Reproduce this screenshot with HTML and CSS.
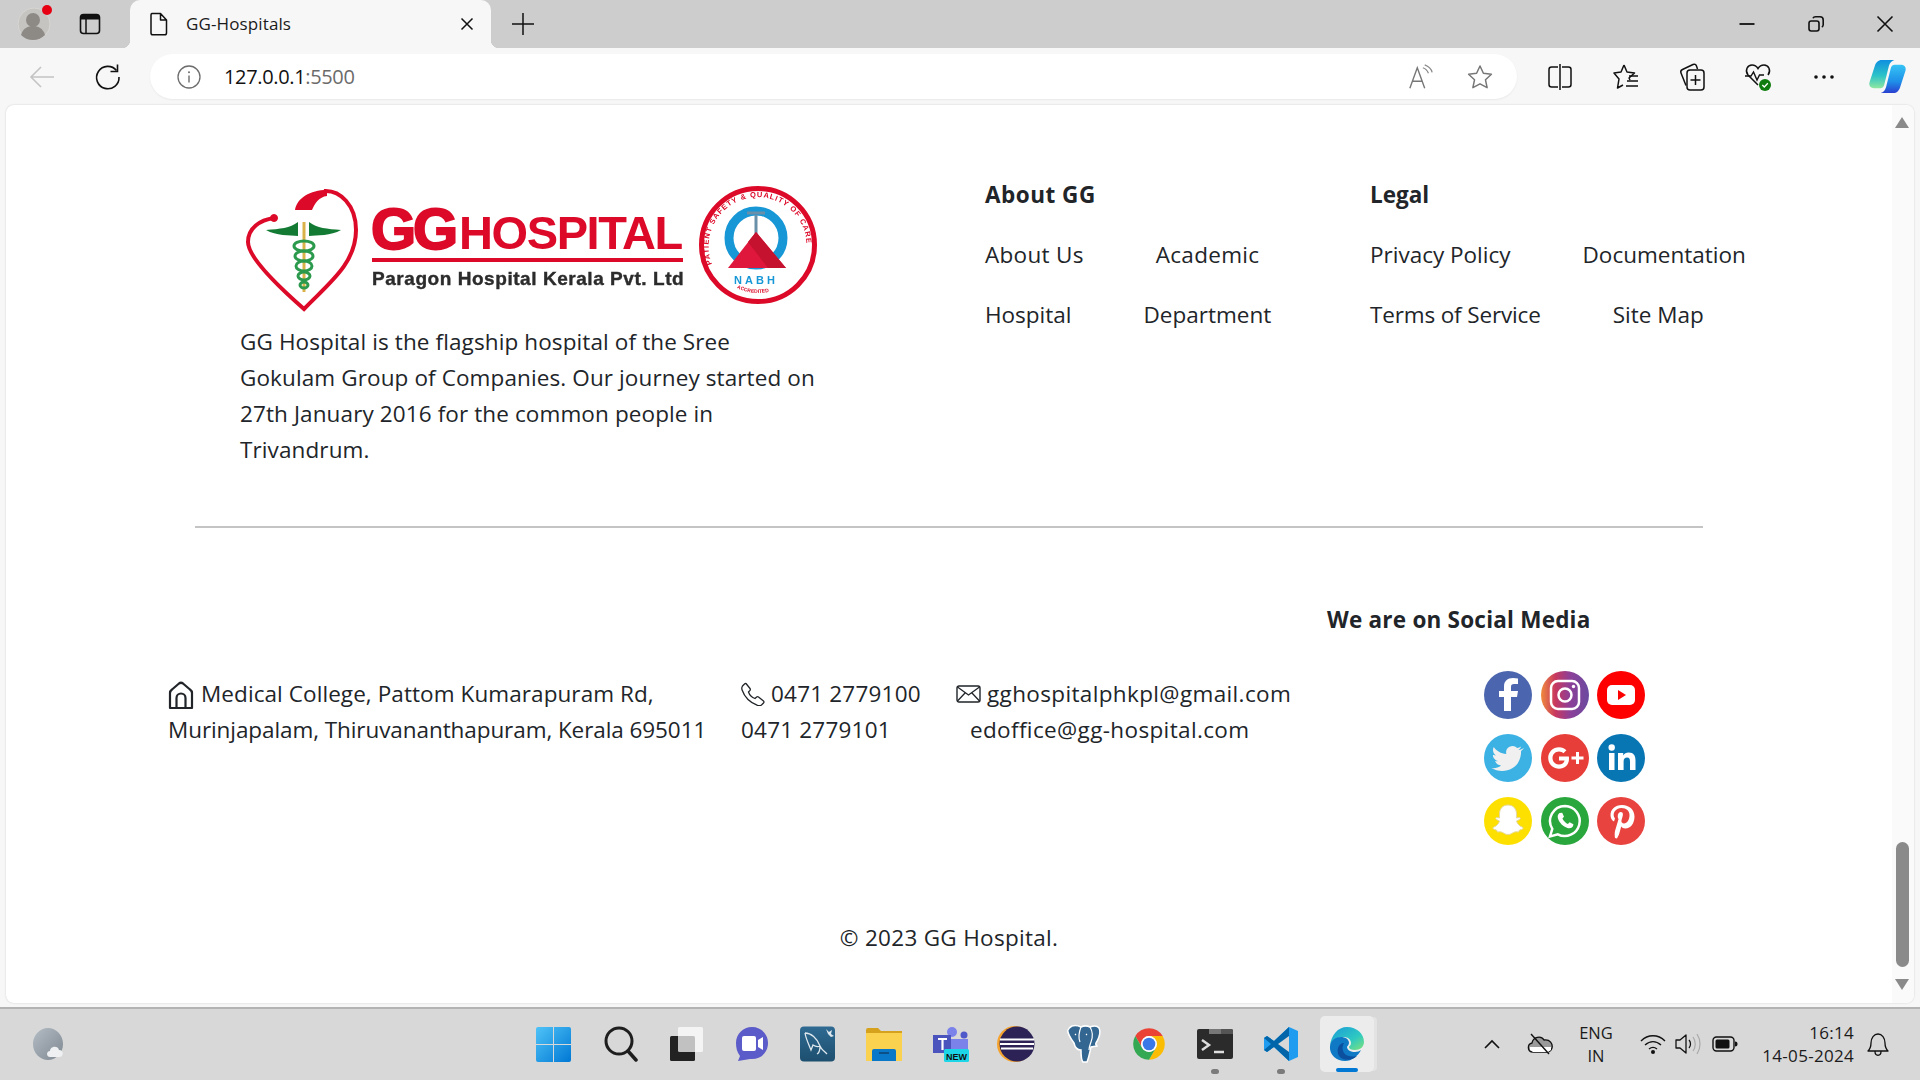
FILE: index.html
```html
<!DOCTYPE html>
<html lang="en">
<head>
<meta charset="utf-8">
<title>GG-Hospitals</title>
<link rel="stylesheet" href="styles.css">
</head>
<body>
<header class="tabstrip">
  <div class="slot profile">
    <svg width="40" height="40" viewBox="0 0 40 40"><circle cx="20" cy="20" r="16" fill="#c6c4c1" stroke="#d8d6d3"/><circle cx="19" cy="16" r="7" fill="#8d8a86"/><path d="M7 31c2-7 7-9 12-9s10 2 12 9c-3 3-7 5-12 5s-9-2-12-5z" fill="#8d8a86"/><circle cx="33" cy="6" r="5" fill="#e60012"/></svg>
  </div>
  <div class="slot tabs-btn">
    <svg width="24" height="24" viewBox="0 0 24 24"><rect x="2.500" y="2.500" width="19" height="19" rx="3" fill="none" stroke="#111" stroke-width="1.600"/><path d="M2.500 5.500a3 3 0 0 1 3-3h13a3 3 0 0 1 3 3v2h-19z" fill="#111"/><path d="M8 7v14" stroke="#111" stroke-width="1.500"/></svg>
  </div>
  <div class="tab">
    <svg class="doc" width="20" height="24" viewBox="0 0 20 24"><path d="M3 1.500h8.500l6 6.500v13a1.800 1.800 0 0 1-1.800 1.800H3.800A1.800 1.800 0 0 1 2 21V3a1.500 1.500 0 0 1 1-1.500zM11.500 1.500V8h6" fill="none" stroke="#111" stroke-width="1.500" stroke-linejoin="round"/></svg>
    <span class="tab-title">GG-Hospitals</span>
    <svg class="tab-close" width="24" height="24" viewBox="0 0 24 24"><path d="M6.500 6.500l11 11M17.500 6.500l-11 11" stroke="#111" stroke-width="1.500"/></svg>
  </div>
  <div class="slot plus">
    <svg width="24" height="24" viewBox="0 0 24 24"><path d="M12 1v22M1 12h22" stroke="#111" stroke-width="1.500"/></svg>
  </div>
  <div class="win-controls">
    <div class="win-btn"><svg width="18" height="18" viewBox="0 0 18 18"><path d="M1.500 9h15" stroke="#111" stroke-width="1.800"/></svg></div>
    <div class="win-btn"><svg width="18" height="18" viewBox="0 0 18 18"><rect x="2" y="6" width="10" height="10" rx="2.200" fill="none" stroke="#111" stroke-width="1.600"/><path d="M6 3.200C6.500 2 7.500 1.800 8.500 1.800h4.500c2 0 3.200 1.200 3.200 3.200v4.800c0 1-.4 1.800-1.400 2.200" fill="none" stroke="#111" stroke-width="1.600"/></svg></div>
    <div class="win-btn"><svg width="18" height="18" viewBox="0 0 18 18"><path d="M1.500 1.500l15 15M16.500 1.500l-15 15" stroke="#111" stroke-width="1.600"/></svg></div>
  </div>
</header>

<nav class="toolbar">
  <div class="tool"><svg width="28" height="28" viewBox="0 0 28 28"><path d="M26 14H3M13 4L3 14l10 10" fill="none" stroke="#c4c4c4" stroke-width="1.600"/></svg></div>
  <div class="tool"><svg width="28" height="28" viewBox="0 0 28 28"><path d="M22.500 7.500A11.200 11.200 0 1 0 25 14" fill="none" stroke="#111" stroke-width="1.600"/><path d="M23.500 1.500v7h-7" fill="none" stroke="#111" stroke-width="1.600"/></svg></div>
  <div class="pill">
    <svg class="info" width="24" height="24" viewBox="0 0 24 24"><circle cx="12" cy="12" r="11" fill="none" stroke="#6d6d6d" stroke-width="1.300"/><path d="M12 10.500v7" stroke="#6d6d6d" stroke-width="1.400"/><circle cx="12" cy="7.300" r="1" fill="#6d6d6d"/></svg>
    <span class="url">127.0.0.1<span class="port">:5500</span></span>
    <div class="pill-actions">
      <div class="pill-action"><svg width="26" height="26" viewBox="0 0 28 28"><path d="M2 26L10 4l8 22M4.800 18.500h10.500" fill="none" stroke="#777" stroke-width="1.500"/><path d="M16 4c3 1 5 3 6 6M18 1c4 1.500 7 4 8 8" fill="none" stroke="#888" stroke-width="1.300"/></svg></div>
      <div class="pill-action"><svg width="28" height="28" viewBox="0 0 28 28"><path d="M14 3l3.400 7.300 8 1-5.900 5.500 1.600 7.900L14 20.800l-7.100 3.900 1.600-7.900-5.900-5.500 8-1z" fill="none" stroke="#777" stroke-width="1.500" stroke-linejoin="round"/></svg></div>
    </div>
  </div>
  <div class="tools-right">
    <div class="tool"><svg width="26" height="28" viewBox="0 0 26 28"><path d="M11 4H4.500A2.500 2.500 0 0 0 2 6.500v15A2.500 2.500 0 0 0 4.500 24H11M15 4h6.500A2.500 2.500 0 0 1 24 6.500v15a2.500 2.500 0 0 1-2.500 2.500H15" fill="none" stroke="#111" stroke-width="1.500"/><path d="M13 1v26" stroke="#111" stroke-width="1.500"/></svg></div>
    <div class="tool"><svg width="28" height="28" viewBox="0 0 28 28"><path d="M12 2l3 7 7.500 1-5.500 5 1 2M12 2L9 9l-7 1 5 6-1.500 9L11 22" fill="none" stroke="#111" stroke-width="1.500" stroke-linejoin="round"/><path d="M17 13h9M15 18h11M14 23h12" stroke="#111" stroke-width="1.500"/></svg></div>
    <div class="tool"><svg width="28" height="30" viewBox="0 0 28 30"><path d="M8 23.500L3 11c-.6-1.600 0-2.800 1.500-3.500L15 2.500c1.600-.7 3 0 3.500 1.500l1 3" fill="none" stroke="#111" stroke-width="1.500"/><rect x="9" y="8" width="17" height="20" rx="3" fill="#f7f7f7" stroke="#111" stroke-width="1.500"/><path d="M17.500 13v10M12.500 18h10" stroke="#111" stroke-width="1.500"/></svg></div>
    <div class="tool"><svg width="28" height="30" viewBox="0 0 28 30"><path d="M14 23L4 13C.5 8.500 3.500 3 8 3c2.800 0 4.800 1.500 6 3.500C15.200 4.500 17.200 3 20 3c4.500 0 7.500 5.500 4 10" fill="none" stroke="#111" stroke-width="1.500"/><path d="M1 14h6l2.500-4 3.500 8 2.500-5H20" fill="none" stroke="#111" stroke-width="1.400"/><circle cx="21" cy="23" r="6" fill="#107c10"/><path d="M18.300 23l2 2 3.500-3.800" fill="none" stroke="#fff" stroke-width="1.300"/></svg></div>
    <div class="tool"><svg width="22" height="6" viewBox="0 0 22 6"><circle cx="3" cy="3" r="1.800" fill="#111"/><circle cx="11" cy="3" r="1.800" fill="#111"/><circle cx="19" cy="3" r="1.800" fill="#111"/></svg></div>
    <div class="tool tool-last"><svg width="37" height="33" viewBox="0 0 38 34"><defs><linearGradient id="cp1" x1="0" y1="0" x2="0" y2="1"><stop offset="0" stop-color="#0f8fe0"/><stop offset=".55" stop-color="#2cc3c8"/><stop offset="1" stop-color="#8fe6a0"/></linearGradient><linearGradient id="cp2" x1="0" y1="0" x2="0" y2="1"><stop offset="0" stop-color="#35c3f5"/><stop offset=".6" stop-color="#1e8fe8"/><stop offset="1" stop-color="#2a3fd0"/></linearGradient></defs><path d="M13 0h13c-3 1-4.500 3-5.500 6l-5 20c-.7 2-2 3-4 3H5c-3.500 0-5.500-2.500-4.500-6L6 6c1-3.500 3.500-6 7-6z" fill="url(#cp1)"/><path d="M25 34H12c3-1 4.500-3 5.500-6l5-20c.7-2 2-3 4-3H33c3.500 0 5.500 2.500 4.500 6L32 28c-1 3.500-3.500 6-7 6z" fill="url(#cp2)"/></svg></div>
  </div>
</nav>

<main class="page">
  <div class="content">
    <section class="top-row">
      <div class="about">
        <svg class="logo" width="585" height="135" viewBox="0 0 585 135">
          <g fill="none" stroke="#dc0a28">
            <path d="M34 38C20 40 8 48 8 62c0 16 32 46 56 67 24-25 52-45 52-79 0-25-16-40-32-39" stroke-width="4"/>
            <circle cx="34" cy="38" r="3.500" fill="#dc0a28"/>
          </g>
          <path d="M55 30c2-12 15-20 32-20l0 6c-8 1-12 7-15 14z" fill="#dc0a28"/>
          <path d="M26 50c14-1 24-2 32-8v14c-8-1-22 0-32-6zM101 50c-14-1-24-2-32-8v14c8-1 22 0 32-6z" fill="#137a34"/>
          <path d="M64 42v70" stroke="#d9b24a" stroke-width="3"/>
          <g fill="none" stroke="#2c9a4c" stroke-width="3"><ellipse cx="64" cy="66" rx="10" ry="5"/><ellipse cx="64" cy="76" rx="9" ry="5"/><ellipse cx="64" cy="86" rx="8" ry="5"/><ellipse cx="64" cy="96" rx="6" ry="4"/><ellipse cx="64" cy="105" rx="4" ry="3"/></g>
          <text class="logo-gg" x="131" y="69">GG</text>
          <text class="logo-hospital" x="219" y="69">HOSPITAL</text>
          <rect x="132" y="78" width="311" height="4" fill="#dc0a28"/>
          <text class="logo-sub" x="132" y="105">Paragon Hospital Kerala Pvt. Ltd</text>
          <circle cx="518" cy="65" r="56.500" fill="#fff" stroke="#dc0a28" stroke-width="5"/>
          <defs><path id="arc-top" d="M472 84a49 49 0 1 1 92-2"/><path id="arc-bottom" d="M490 104a48 48 0 0 0 56 0"/></defs>
          <text class="logo-ring"><textPath href="#arc-top">PATIENT SAFETY &amp; QUALITY OF CARE</textPath></text>
          <text class="logo-ring-small"><textPath href="#arc-bottom" startOffset="8">ACCREDITED</textPath></text>
          <circle cx="516" cy="58" r="27" fill="#fff" stroke="#1797d6" stroke-width="9"/>
          <path d="M507 33h18M516 35v22" stroke="#6a8fa8" stroke-width="3"/>
          <path d="M516 52l30 36h-58z" fill="#e0173c"/>
          <path d="M516 52l-8 10 20 26h18z" fill="#c4122f"/>
          <text class="logo-nabh" x="516" y="104">NABH</text>
        </svg>
        <p class="intro">GG Hospital is the flagship hospital of the Sree Gokulam Group of Companies. Our journey started on 27th January 2016 for the common people in Trivandrum.</p>
      </div>
      <div class="link-col">
        <h4 class="col-title about-title">About GG</h4>
        <div class="link-row wide"><span>About Us</span><span>Academic</span></div>
        <div class="link-row"><span>Hospital</span><span>Department</span></div>
      </div>
      <div class="link-col">
        <h4 class="col-title">Legal</h4>
        <div class="link-row"><span>Privacy Policy</span><span>Documentation</span></div>
        <div class="link-row"><span class="narrow">Terms of Service</span><span>Site Map</span></div>
      </div>
    </section>

    <hr class="rule">

    <section class="contact-row">
      <div class="contact address">
        <svg class="ic-home" width="26" height="29" viewBox="0 0 26 29"><path d="M2 27V12q0-2 2-3.500l7-6q2-1.500 4 0l7 6q2 1.500 2 3.500v15zM8.500 27V17a4.500 4.500 0 0 1 9 0v10" fill="none" stroke="#212529" stroke-width="2.200" stroke-linejoin="round"/></svg><span class="addr-1">Medical College, Pattom Kumarapuram Rd,</span><br><span class="addr-2">Murinjapalam, Thiruvananthapuram, Kerala 695011</span>
      </div>
      <div class="contact phone">
        <svg class="ic-phone" width="24" height="24" viewBox="0 0 24 24"><path d="M5 1.500l4 5c.5.700.4 1.300 0 1.900L7.500 10c1 3 3.500 5.500 6.500 6.500l1.600-1.500c.6-.4 1.200-.5 1.900 0l5 4c.7.600.6 1.400 0 2l-2 2c-1 .7-2.500.9-4 .4C9 20.500 3.500 15 1.100 8c-.5-1.500-.3-3 .4-4l2-2c.5-.6 1-.9 1.500-.5z" fill="none" stroke="#212529" stroke-width="1.300"/></svg>0471 2779100<br>0471 2779101
      </div>
      <div class="contact email">
        <svg class="ic-mail" width="25" height="18" viewBox="0 0 25 18"><rect x="1" y="1" width="23" height="16" rx="2" fill="none" stroke="#212529" stroke-width="1.400"/><path d="M1.500 2l11 8 11-8M1.500 16l8-8.500M23.500 16l-8-8.500" fill="none" stroke="#212529" stroke-width="1.300"/></svg>gghospitalphkpl@gmail.com<br><span class="email-2">edoffice@gg-hospital.com</span>
      </div>
      <div class="social">
        <h4 class="col-title social-title">We are on Social Media</h4>
        <div class="social-grid">
          <svg viewBox="0 0 48 48"><circle cx="24" cy="24" r="24" fill="#4b66ae"/><path d="M27 40V26h6l1-6h-7v-4c0-2 .7-3 3-3h4V7.500c-1.500-.3-3.500-.5-5-.5-5.500 0-9 3-9 8.500V20h-5v6h5v14z" fill="#fff"/></svg>
          <svg viewBox="0 0 48 48"><defs><linearGradient id="ig" x1="0" y1="0" x2="1" y2="0"><stop offset="0" stop-color="#f08a3c"/><stop offset=".3" stop-color="#c8385f"/><stop offset=".6" stop-color="#8d3f97"/><stop offset="1" stop-color="#6a4ba0"/></linearGradient></defs><circle cx="24" cy="24" r="24" fill="url(#ig)"/><rect x="10" y="10" width="28" height="28" rx="7" fill="none" stroke="#fff" stroke-width="2.500"/><circle cx="24" cy="24" r="6.500" fill="none" stroke="#fff" stroke-width="2.500"/><circle cx="32.500" cy="15.500" r="1.700" fill="#fff"/></svg>
          <svg viewBox="0 0 48 48"><circle cx="24" cy="24" r="24" fill="#fe0000"/><rect x="10" y="14" width="28" height="20" rx="5" fill="#fff"/><path d="M21 19v10l8-5z" fill="#fe0000"/></svg>
          <svg viewBox="0 0 48 48"><circle cx="24" cy="24" r="24" fill="#3cb1e3"/><path d="M38 15c-1.200.6-2.400.9-3.600 1 1.300-.8 2.200-2 2.700-3.400-1.200.7-2.500 1.200-3.900 1.500a6.400 6.400 0 0 0-10.900 5.800C17 19.600 12.300 17 9.800 13c-1.600 3-.7 6.300 2 8.500-1 0-2-.3-2.900-.8 0 3.100 2.200 5.700 5.100 6.300-.9.300-1.900.3-2.900.1.800 2.500 3.200 4.400 6 4.400-2.800 2.200-6 3-9.500 2.600 10.500 6.500 29.500 2.500 29.500-17 1.200-.9 2.200-1.900 3-3z" fill="#f0f0f0"/></svg>
          <svg viewBox="0 0 48 48"><circle cx="24" cy="24" r="24" fill="#e73e39"/><path d="M18 17.500c2 0 3.400.8 4.400 1.800l3-3C23.400 14.400 21 13.300 18 13.300c-6 0-10.800 4.700-10.800 10.700S12 34.700 18 34.700c6.300 0 10-4.300 10-10 0-.8 0-1.500-.200-2.200H18v4h5.600c-.6 2.600-2.700 4-5.600 4-3.700 0-6.500-2.900-6.500-6.500s2.800-6.500 6.500-6.500z" fill="#fff"/><path d="M35 18v4.500h-4.500v3H35V30h3v-4.500h4.500v-3H38V18z" fill="#fff"/></svg>
          <svg viewBox="0 0 48 48"><circle cx="24" cy="24" r="24" fill="#0976b4"/><rect x="12" y="19" width="5.500" height="17" fill="#fff"/><circle cx="14.700" cy="13.500" r="3.200" fill="#fff"/><path d="M21 19h5.200v2.500c1-1.700 3-3 5.500-3 5 0 6.800 3 6.800 8V36H33v-8.500c0-2.500-.7-4-2.800-4-2.300 0-3.600 1.600-3.600 4V36H21z" fill="#fff"/></svg>
          <svg viewBox="0 0 48 48"><circle cx="24" cy="24" r="24" fill="#fde000"/><path d="M24 8c5.500 0 8.500 4 8.500 9v4l3-.5c1 .5 1 1.500 0 2l-3 1.500c.7 3 3.500 5.500 6.500 6.500.5 1-.5 2-3.500 2.500l-1 2c-2.500-.5-4.500 0-6 1-1.500 1-3 1.500-4.500 1.500s-3-.5-4.500-1.500c-1.500-1-3.500-1.500-6-1l-1-2c-3-.5-4-1.500-3.500-2.500 3-1 5.800-3.500 6.500-6.500l-3-1.500c-1-.5-1-1.500 0-2l3 .5v-4c0-5 3-9 8.500-9z" fill="#fff" stroke="#e6d9a0"/></svg>
          <svg viewBox="0 0 48 48"><circle cx="24" cy="24" r="24" fill="#29a63c"/><path d="M24 9a15 15 0 0 0-12.700 22.900L9 39.500l7.800-2.200A15 15 0 1 0 24 9z" fill="none" stroke="#fff" stroke-width="2.500"/><path d="M18.500 16c-1.500 1.200-2.300 3-1.500 5.500 1.500 4.500 5 8 9.500 9.500 2.500.7 4.500 0 5.500-1.700l.4-2-3.800-2-1.700 1.700c-2-.8-4.500-3.200-5.500-5.500l1.600-1.700-1.800-4z" fill="#fff"/></svg>
          <svg viewBox="0 0 48 48"><circle cx="24" cy="24" r="24" fill="#e8433e"/><path d="M25 8c-7 0-11.500 4.500-11.500 10 0 3 1.300 5.500 3.500 6.500l1-3c-3.500-4.500.3-10.500 6.500-10.500 5 0 8 3 8 7 0 4.500-2.300 8.500-5.500 8.500-1.800 0-3-1.400-2.500-3.200.5-2 1.400-4.300 1.400-5.800 0-3.800-5.200-3-5.200 1.800 0 1 .3 2.200.8 3L18 34c-.5 2.500-.3 5 0 7l2 .5c1.500-2.500 2.500-5 3-7.500l1.200-4.500c.8 1.200 2.300 2 4 2 5.800 0 9.300-5.500 9.300-12C37.500 13 32.500 8 25 8z" fill="#fff"/></svg>
        </div>
      </div>
    </section>

    <p class="copyright">© 2023 GG Hospital.</p>
  </div>
  <aside class="scrollbar">
    <span class="arrow-up"></span>
    <span class="thumb"></span>
    <span class="arrow-down"></span>
  </aside>
</main>

<footer class="taskbar">
  <div class="weather"><svg width="36" height="36" viewBox="0 0 36 36"><defs><linearGradient id="wx" x1="0" y1="0" x2="1" y2="1"><stop offset="0" stop-color="#b4bcc4"/><stop offset="1" stop-color="#7f8992"/></linearGradient></defs><ellipse cx="18" cy="18" rx="15" ry="16" fill="url(#wx)"/><path d="M20 31c-4 0-4-6 0-6 0-5 8-6 9-1 5 0 5 7 0 7z" fill="#eef0f2"/></svg></div>
  <div class="apps">
    <div class="app"><svg width="35" height="35" viewBox="0 0 35 35"><defs><linearGradient id="win" x1="0" y1="0" x2="1" y2="1"><stop offset="0" stop-color="#4fc3f7"/><stop offset="1" stop-color="#0078d4"/></linearGradient></defs><path d="M0 2a2 2 0 0 1 2-2h15v17H0zM18 0h15a2 2 0 0 1 2 2v15H18zM0 18h17v17H2a2 2 0 0 1-2-2zM18 18h17v15a2 2 0 0 1-2 2H18z" fill="url(#win)"/></svg></div>
    <div class="app search-app"><svg width="34" height="36" viewBox="0 0 34 36"><ellipse cx="15" cy="15" rx="13" ry="13" fill="none" stroke="#1e1e1e" stroke-width="3"/><path d="M24 25l8 9" stroke="#1e1e1e" stroke-width="3.500" stroke-linecap="round"/></svg></div>
    <div class="app"><svg width="36" height="36" viewBox="0 0 36 36"><rect x="3" y="10" width="25" height="25" rx="1.500" fill="#222"/><rect x="11" y="1" width="25" height="25" rx="1.500" fill="#fff" opacity=".72"/></svg></div>
    <div class="app"><svg width="36" height="36" viewBox="0 0 36 36"><path d="M18 1c9 0 16 7 16 16 0 10-8 17-18 16l-12 2 2-5C3 26 2 22 2 17 2 8 9 1 18 1z" fill="#5b5bc9"/><rect x="8" y="10" width="14" height="15" rx="2" fill="#fff"/><path d="M24 14l5-3v13l-5-3z" fill="#fff"/></svg></div>
    <div class="app"><svg width="36" height="36" viewBox="0 0 36 36"><defs><linearGradient id="my" x1="0" y1="0" x2="0" y2="1"><stop offset="0" stop-color="#2f6a92"/><stop offset="1" stop-color="#1d4f6f"/></linearGradient></defs><rect width="35" height="35" y=".5" rx="4" fill="url(#my)"/><path d="M5 7c6 0 12 5 15 13 1 3 4 5 7 8M5 7c1 6 4 12 6 17l2-5c3 2 5 2 7 1M17 28c2-1 3-3 3-8" fill="none" stroke="#dfe8ee" stroke-width="1.300"/><path d="M26 3l3 3 3-2-1 4 3 2-3 1-3-3z" fill="#dfe8ee"/></svg></div>
    <div class="app"><svg width="36" height="36" viewBox="0 0 36 36"><path d="M0 4a2 2 0 0 1 2-2h10l3 3h21v4H0z" fill="#d6a21e"/><path d="M0 7h36v28H0z" fill="#fbd24f"/><path d="M6 35V25a2 2 0 0 1 2-2h20a2 2 0 0 1 2 2v10z" fill="#0a78c9"/><path d="M13 27h10" stroke="#0b4f86" stroke-width="2"/></svg></div>
    <div class="app"><svg width="38" height="38" viewBox="0 0 38 38"><circle cx="21" cy="7" r="5" fill="#7b83eb"/><circle cx="33" cy="10" r="3.500" fill="#5059c9"/><path d="M15 14h22v12H15z" fill="#7b83eb"/><path d="M2 10h18v18H2z" fill="#4b53bc"/><path d="M7 14h9M11.500 14v11" stroke="#fff" stroke-width="2.200"/><rect x="13" y="24" width="25" height="13" rx="1.500" fill="#1cd6e8"/><text class="new-badge" x="25.500" y="34.500">NEW</text></svg></div>
    <div class="app"><svg width="38" height="36" viewBox="0 0 38 36"><circle cx="18" cy="18" r="18" fill="#f5a32f"/><circle cx="20" cy="18" r="17.500" fill="#2c2255"/><path d="M3 13.500h34M3 18h34M4 22.500h32" stroke="#fff" stroke-width="2"/></svg></div>
    <div class="app"><svg width="36" height="40" viewBox="0 0 36 40"><path d="M7 2c3-1 7 0 9 1 3-1.500 6-1.500 9 0 3-1 7-2 9 1 2 4 0 10-3 15-1 2 1 2 1 3l-6 1c-1 4-2 10-4 15h-4c-2-2-2-7-2-12-3 0-6-2-7-7C6 15 2 8 3 6c.5-2 2-3 4-4z" fill="#336791" stroke="#fff" stroke-width="1.500"/><path d="M16 3c-2 5-3 10-1 15M25 3c3 5 3 10 1 15-1 3-2 5-2 8M10 10l1 1M21 10l1 1" fill="none" stroke="#fff" stroke-width="1.200"/></svg></div>
    <div class="app"><svg width="38" height="38" viewBox="0 0 48 48"><path d="M6.700 14a20 20 0 0 1 34.600 0H24a10 10 0 0 0-8.660 15z" fill="#ea4335"/><path d="M41.300 14A20 20 0 0 1 24 44l8.660-15A10 10 0 0 0 24 14z" fill="#fbbc04"/><path d="M24 44A20 20 0 0 1 6.700 14l8.640 15a10 10 0 0 0 17.320 0z" fill="#34a853"/><circle cx="24" cy="24" r="10" fill="#fff"/><circle cx="24" cy="24" r="8" fill="#3b78e7"/></svg></div>
    <div class="app has-dot"><svg width="36" height="30" viewBox="0 0 36 30"><rect width="36" height="30" rx="2" fill="#2b2b2b"/><path d="M12 0h12v5H12z" fill="#777"/><path d="M24 0h10a2 2 0 0 1 2 2v3H24z" fill="#555"/><path d="M5 11l7 5-7 5" fill="none" stroke="#ddd" stroke-width="2.500"/><path d="M17 23h10" stroke="#ddd" stroke-width="2.500"/></svg></div>
    <div class="app has-dot"><svg width="36" height="36" viewBox="0 0 36 36"><path d="M26 1L11 15 4 10 1 12v12l3 2 7-5 15 14 9-4V5z" fill="#1f9cf0"/><path d="M26 1L11 15 4 10 1 12l7 6-7 6 3 2 7-5 15 14z" fill="#0065a9"/><path d="M26 10L15 18l11 8z" fill="#d8d8d8"/></svg></div>
    <div class="app app-active"><svg width="36" height="36" viewBox="0 0 36 36"><defs><linearGradient id="ed" x1="0" y1="0" x2="1" y2="1"><stop offset="0" stop-color="#1a9ad8"/><stop offset=".6" stop-color="#2ec9c2"/><stop offset="1" stop-color="#7fe27a"/></linearGradient></defs><path d="M18 1c10 0 17 7 17 15 0 5-4 8-9 8-4 0-6-1-6-3 0-1 2-1 2-4 0-4-4-6-7-6-6 0-12 4-14 9C2 9 9 1 18 1z" fill="url(#ed)"/><path d="M1 20c1-6 6-9 11-9 4 0 8 2 8 6 0 2-2 3-2 4 0 3 4 5 8 5 2 0 5-1 6-2-3 6-9 11-16 11C8 35 0 29 1 20z" fill="#0f79c6"/><path d="M14 33c-5-2-6-7-5-11 1-3 3-5 6-5-2 3-2 7 0 10 3 4 9 4 13 3-3 3-9 5-14 3z" fill="#0b4f9e"/></svg></div>
  </div>
  <div class="tray">
    <svg class="t-chevron" width="24" height="14" viewBox="0 0 24 14"><path d="M5 11l7-7 7 7" fill="none" stroke="#111" stroke-width="1.600"/></svg>
    <svg class="t-cloud" width="26" height="24" viewBox="0 0 26 24"><path d="M6 20c-6 0-6-8-1-9 1-6 9-8 12-3 6-1 9 4 8 8-1 3-3 4-5 4z" fill="#9a9a9a" stroke="#111" stroke-width="1.300"/><path d="M3 15h21v3l-3 2H6l-3-2z" fill="#fff"/><path d="M4 2l18 20" stroke="#111" stroke-width="1.400"/></svg>
    <div class="t-lang">ENG<br>IN</div>
    <svg class="t-wifi" width="26" height="22" viewBox="0 0 26 22"><path d="M1 8c7-7 17-7 24 0M5 12c5-4.500 11-4.500 16 0M9 16c2.500-2 5.500-2 8 0" fill="none" stroke="#111" stroke-width="1.400"/><circle cx="13" cy="19" r="2" fill="#111"/></svg>
    <svg class="t-vol" width="26" height="24" viewBox="0 0 26 24"><path d="M1 8v8h4l6 5V3L5 8z" fill="none" stroke="#111" stroke-width="1.300" stroke-linejoin="round"/><path d="M14 8c2 2 2 6 0 8" fill="none" stroke="#111" stroke-width="1.300"/><path d="M18 5c3 4 3 10 0 14M22 2c4 6 4 14 0 20" fill="none" stroke="#a8a8a8" stroke-width="1.200"/></svg>
    <svg class="t-batt" width="26" height="16" viewBox="0 0 26 16"><rect x="1" y="1" width="21" height="14" rx="3.500" fill="none" stroke="#111" stroke-width="1.400"/><rect x="3.500" y="3.500" width="14" height="9" rx="1.500" fill="#111"/><path d="M23 5.500c2 0 2.500 1 2.500 2.500s-.5 2.500-2.500 2.500z" fill="#111"/></svg>
    <div class="t-clock">16:14<br>14-05-2024</div>
    <svg class="t-bell" width="24" height="26" viewBox="0 0 24 26"><path d="M2 20c2-2 3-4 3-8 0-5 3-9 7-9s7 4 7 9c0 4 1 6 3 8zM9 20.500c0 5 6 5 6 0" fill="none" stroke="#111" stroke-width="1.300" stroke-linejoin="round"/></svg>
  </div>
</footer>
</body>
</html>
```
FILE: styles.css
```css
* { box-sizing: border-box; }
html, body { height: 100%; }
body {
  margin: 0;
  width: 1920px;
  height: 1080px;
  overflow: hidden;
  display: flex;
  flex-direction: column;
  background: #f7f7f7;
  color: #212529;
  font-family: "Open Sans", "Noto Sans", sans-serif;
}

/* browser chrome */
.tabstrip {
  height: 48px;
  flex: none;
  display: flex;
  align-items: center;
  padding-left: 6px;
  background: #cdcdcd;
}
.slot { display: flex; align-items: center; justify-content: center; height: 48px; }
.profile { width: 56px; }
.tabs-btn { width: 56px; }
.plus { width: 50px; margin-left: 6px; }
.plus svg { margin-left: 1px; }
.tab {
  position: relative;
  width: 361px;
  height: 48px;
  margin-left: 12px;
  padding: 0 12px 0 19px;
  display: flex;
  align-items: center;
  background: #f7f7f7;
  border-radius: 10px 10px 0 0;
}
.tab::before, .tab::after {
  content: "";
  position: absolute;
  bottom: 0;
  width: 8px;
  height: 8px;
}
.tab::before { left: -8px; background: radial-gradient(circle at 0 0, transparent 8px, #f7f7f7 8.5px); }
.tab::after { right: -8px; background: radial-gradient(circle at 100% 0, transparent 8px, #f7f7f7 8.5px); }
.doc { flex: none; }
.tab-title { flex: 1; margin: -2px 0 0 17px; font-size: 17px; letter-spacing: .12px; color: #1b1b1b; }
.tab-close { flex: none; }
.win-controls { margin-left: auto; display: flex; padding-right: 1px; }
.win-btn { width: 69px; height: 48px; display: flex; align-items: center; justify-content: center; }

.toolbar {
  height: 57px;
  flex: none;
  display: flex;
  align-items: flex-start;
  padding: 6px 0 0 9px;
  background: #f7f7f7;
}
.tool { width: 66px; height: 45px; flex: none; display: flex; align-items: center; justify-content: center; }
.tool-last { width: 60px; }
.pill {
  width: 1367px;
  height: 45px;
  margin-left: 9px;
  padding: 0 8px 0 27px;
  flex: none;
  display: flex;
  align-items: center;
  background: #fff;
  border-radius: 23px;
  box-shadow: 0 1px 2px rgba(0, 0, 0, .06);
}
.info { flex: none; }
.url { margin: -1px 0 0 23px; font-size: 20px; color: #111; letter-spacing: -.35px; }
.port { color: #6b6b6b; }
.pill-actions { margin-left: auto; display: flex; }
.pill-action { width: 59px; height: 45px; display: flex; align-items: center; justify-content: center; }
.tools-right { margin-left: 10px; display: flex; }

/* page */
.page {
  flex: none;
  height: 898px;
  margin: 0 6px;
  display: flex;
  background: #fff;
  border-radius: 8px;
  box-shadow: 0 0 2px rgba(0, 0, 0, .18);
  overflow: hidden;
}
.content { flex: 1; min-width: 0; font-size: 22.500px; line-height: 36px; }
.scrollbar {
  width: 22px;
  flex: none;
  display: flex;
  flex-direction: column;
  align-items: center;
  padding: 12px 2px 13px 0;
  background: #fafafa;
}
.arrow-up, .arrow-down { width: 0; height: 0; border-left: 7px solid transparent; border-right: 7px solid transparent; }
.arrow-up { border-bottom: 11px solid #8a8a8a; }
.arrow-down { border-top: 11px solid #8a8a8a; }
.thumb { width: 13px; height: 125px; margin-top: auto; margin-bottom: 12px; background: #8a8a8a; border-radius: 7px; }

.top-row { display: flex; padding: 72px 0 0 234px; }
.about { width: 745px; flex: none; }
.logo { display: block; margin-top: 3px; filter: blur(.55px); }
.intro { width: 585px; margin: 9px 0 0; letter-spacing: .11px; }
.link-col { width: 385px; flex: none; display: flex; flex-direction: column; gap: 24px; }
.col-title { margin: 0; font-size: 22.500px; line-height: 36px; font-weight: 700; }
.about-title { letter-spacing: .5px; }
.link-row { display: flex; gap: 72px; }
.wide { letter-spacing: .3px; }
.narrow { letter-spacing: -.15px; }

.logo-gg { font: 700 58px/1 "Liberation Sans", sans-serif; fill: #dc0a28; letter-spacing: -3px; stroke: #dc0a28; stroke-width: 2px; }
.logo-hospital { font: 700 47px/1 "Liberation Sans", sans-serif; fill: #dc0a28; letter-spacing: -1.400px; }
.logo-sub { font: 700 19px/1 "Liberation Sans", sans-serif; fill: #2c2c2c; letter-spacing: .55px; stroke: #2c2c2c; stroke-width: .4px; }
.logo-ring { font: 700 7.500px/1 "Liberation Sans", sans-serif; fill: #dc0a28; letter-spacing: .9px; }
.logo-ring-small { font: 700 5px/1 "Liberation Sans", sans-serif; fill: #dc0a28; }
.logo-nabh { font: 700 11px/1 "Liberation Sans", sans-serif; fill: #1797d6; text-anchor: middle; letter-spacing: 3px; }

.rule { height: 2px; width: 1508px; margin: 58px 0 0 189px; border: 0; background: #c4c4c4; }

.contact-row { display: flex; align-items: flex-start; padding: 74px 0 0 162px; }
.contact { flex: none; margin-top: 74px; }
.address { width: 573px; }
.addr-1 { letter-spacing: .08px; }
.addr-2 { letter-spacing: -.08px; }
.phone { width: 215px; letter-spacing: .2px; }
.email { width: 371px; letter-spacing: .36px; }
.email-2 { margin-left: 14px; }
.ic-home { vertical-align: -8px; margin-right: 7px; }
.ic-phone { vertical-align: -4px; margin-right: 6px; }
.ic-mail { vertical-align: -1px; margin-right: 6px; }
.social-title { letter-spacing: .22px; }
.social-grid {
  display: grid;
  grid-template-columns: repeat(3, 48px);
  grid-auto-rows: 48px;
  gap: 15px 8.500px;
  margin: 33px 0 0 157px;
  filter: blur(.4px);
}
.social-grid svg { display: block; width: 48px; height: 48px; }
.copyright { margin: 75px 0 0; text-align: center; letter-spacing: .3px; }

/* taskbar */
.taskbar {
  position: relative;
  height: 75px;
  flex: none;
  margin-top: 4px;
  padding-bottom: 3px;
  display: flex;
  align-items: center;
  background: #d8d8d8;
  border-top: 2px solid #b3b3b3;
}
.weather { width: 66px; padding-left: 30px; flex: none; height: 36px; }
.apps { display: flex; margin-left: 454px; flex: none; }
.app { position: relative; width: 66.200px; height: 56px; flex: none; display: flex; align-items: center; justify-content: center; }
.search-app svg { margin-left: 3px; }
.has-dot::after {
  content: "";
  position: absolute;
  left: 29px;
  bottom: -2px;
  width: 8px;
  height: 5px;
  border-radius: 3px;
  background: #7b7b7b;
}
.app-active { background: #ececec; border-radius: 5px; box-shadow: 4px 0 0 -1px #e3e3e3; width: 54px; margin-left: 6px; }
.app-active::after {
  content: "";
  position: absolute;
  left: 16px;
  bottom: 0;
  width: 22px;
  height: 4px;
  border-radius: 2px;
  background: #0078d4;
}
.tray { margin-left: auto; padding-right: 30px; display: flex; align-items: center; font-size: 16.500px; line-height: 23px; color: #1b1b1b; }
.t-chevron { margin-right: 1px; margin-left: -2px; }
.t-cloud { margin-left: 22px; }
.t-lang { width: 40px; margin-left: 23px; text-align: center; }
.t-wifi { margin-left: 24px; }
.t-vol { margin-left: 9px; }
.t-batt { margin-left: 11px; }
.t-clock { width: 100px; margin-left: 16px; text-align: right; white-space: nowrap; font-size: 17px; letter-spacing: .3px; }
.t-bell { margin-left: 12px; }
.new-badge { font: 700 9px/1 "Liberation Sans", sans-serif; fill: #111; text-anchor: middle; }
```
